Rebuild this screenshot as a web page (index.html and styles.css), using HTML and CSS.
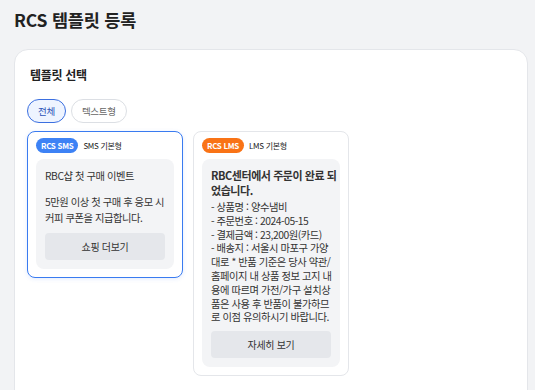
FILE: index.html
```html
<!DOCTYPE html>
<html lang="ko">
<head>
  <meta charset="UTF-8">
  <meta name="viewport" content="width=device-width, initial-scale=1.0">
  <title>RCS 템플릿 등록</title>
  <link rel="stylesheet" href="styles.css">
</head>
<body>
  <h1 class="page-title">RCS 템플릿 등록</h1>

  <div class="panel">
    <h2 class="panel-title">템플릿 선택</h2>

    <div class="chips">
      <button class="chip active">전체</button>
      <button class="chip">텍스트형</button>
    </div>

    <div class="template-list">
      <div class="template-card selected">
        <div class="template-head">
          <span class="badge sms">RCS SMS</span>
          <span class="template-type">SMS 기본형</span>
        </div>
        <div class="template-body">
          <p class="msg-title">RBC샵 첫 구매 이벤트</p>
          <p class="msg-text">5만원 이상 첫 구매 후 응모 시<br>커피 쿠폰을 지급합니다.</p>
          <button class="msg-button">쇼핑 더보기</button>
        </div>
      </div>

      <div class="template-card">
        <div class="template-head">
          <span class="badge lms">RCS LMS</span>
          <span class="template-type">LMS 기본형</span>
        </div>
        <div class="template-body">
          <p class="msg-title bold">RBC센터에서 주문이 완료 되<br>었습니다.</p>
          <p class="msg-list">- 상품명 : 양수냄비<br>- 주문번호 : 2024-05-15<br>- 결제금액 : 23,200원(카드)<br>- 배송지 : 서울시 마포구 가양<br>대로 * 반품 기준은 당사 약관/<br>홈페이지 내 상품 정보 고지 내<br>용에 따르며 가전/가구 설치상<br>품은 사용 후 반품이 불가하므<br>로 이점 유의하시기 바랍니다.</p>
          <button class="msg-button">자세히 보기</button>
        </div>
      </div>
    </div>
  </div>
</body>
</html>
```

FILE: styles.css
```css
body {
  font-family: "Noto Sans CJK KR", "Noto Sans", sans-serif;
  color: #222;
  margin: 0;
  padding: 0 0 0 14px;
  background-color: #f2f3f5;
}

.page-title {
  margin: 0;
  padding-top: 8px;
  height: 49px;
  font-size: 17.5px;
  font-weight: 700;
  line-height: 24px;
  letter-spacing: -0.2px;
  box-sizing: border-box;
}

.panel {
  width: 514px;
  min-height: 360px;
  background-color: white;
  border: 1px solid #e4e6ea;
  border-radius: 14px;
  padding: 15px 12px 13px;
  box-sizing: border-box;
}

.panel-title {
  margin: 0 0 0 3px;
  font-size: 12px;
  font-weight: 700;
  line-height: 20px;
  letter-spacing: -0.3px;
}

.chips {
  display: flex;
  gap: 5px;
  margin-top: 14px;
}

.chip {
  font-family: inherit;
  height: 24px;
  padding: 0 10px;
  border: 1px solid #dcdfe4;
  border-radius: 12px;
  background-color: white;
  color: #666;
  font-size: 9.5px;
  letter-spacing: -0.3px;
  cursor: pointer;
}

.chip.active {
  border-color: #3b6fe0;
  background-color: #eef4ff;
  color: #2d55b8;
}

.template-list {
  display: flex;
  align-items: flex-start;
  gap: 10px;
  margin-top: 8px;
}

.template-card {
  width: 156px;
  background-color: white;
  border: 1px solid #e4e6ea;
  border-radius: 8px;
  padding: 6px 8px 8px;
  box-sizing: border-box;
}

.template-card.selected {
  border-color: #3a7bf0;
  box-shadow: 0 1px 4px rgba(59,123,240,0.15);
}

.template-head {
  display: flex;
  align-items: center;
  gap: 5px;
  height: 15px;
}

.badge {
  height: 15px;
  padding: 0 5px;
  border-radius: 8px;
  color: white;
  font-size: 8px;
  font-weight: 700;
  line-height: 15px;
  letter-spacing: -0.3px;
}

.badge.sms {
  background-color: #3d82f5;
}

.badge.lms {
  background-color: #f97316;
}

.template-type {
  font-size: 8px;
  color: #222;
  letter-spacing: -0.3px;
}

.template-body {
  margin-top: 6px;
  background-color: #f3f4f6;
  border-radius: 8px;
  padding: 9px;
}

.template-body p {
  margin: 0;
  font-size: 10.3px;
  letter-spacing: -0.45px;
  color: #333;
  white-space: nowrap;
}

.template-body .msg-title {
  line-height: 16px;
  margin-bottom: 10px;
}

.template-body .msg-title.bold {
  font-size: 11px;
  font-weight: 700;
  line-height: 15px;
  margin-bottom: 2px;
}

.msg-text {
  line-height: 16px;
}

.msg-list {
  line-height: 13.8px;
}

.msg-button {
  display: block;
  width: 100%;
  height: 27px;
  margin-top: 7px;
  border: none;
  border-radius: 4px;
  background-color: #e5e7eb;
  color: #333;
  font-family: inherit;
  font-size: 10px;
  letter-spacing: -0.3px;
}
```
